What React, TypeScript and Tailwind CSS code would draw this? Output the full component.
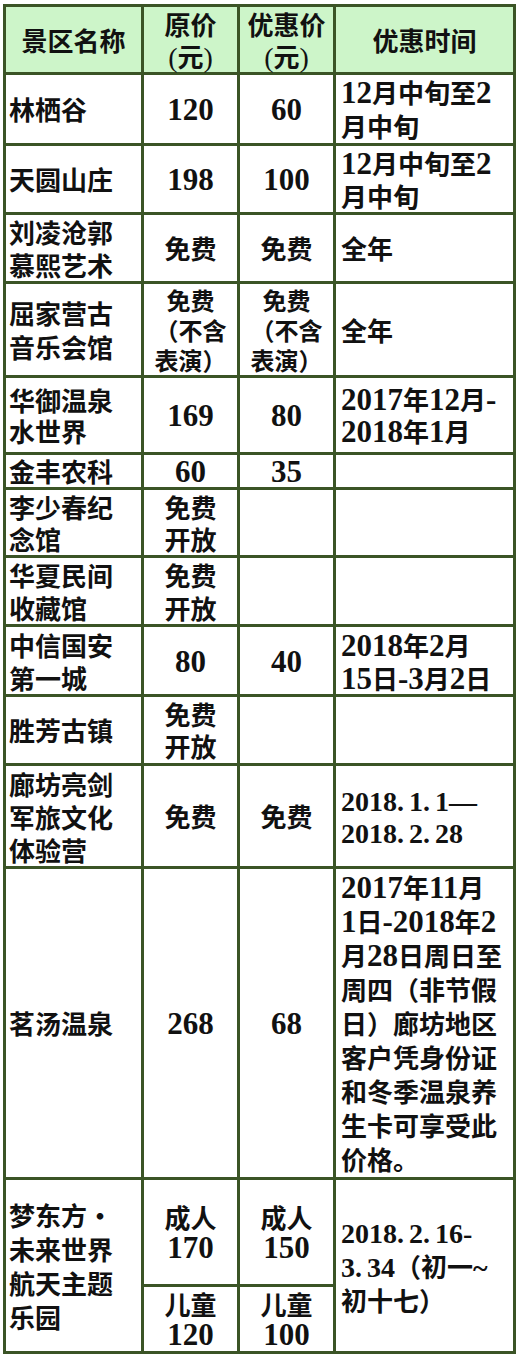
import React from 'react';

// Latin runs (digits, dots, dashes) are set in a serif face, larger and bold, like the original table
const LATIN = /([0-9.\-~—()]+)/;

const Rich = ({ text, num }: { text: string; num: string }) => {
  const parts = text.split(LATIN);
  return (
    <>
      {parts.map((p, i) => {
        if (!p) return null;
        if (!LATIN.test(p)) {
          if (p.includes('·')) {
            return (
              <React.Fragment key={i}>
                {p.replace('·', '')}
                <span className="inline-block w-[26px] text-center font-bold">·</span>
              </React.Fragment>
            );
          }
          return <React.Fragment key={i}>{p}</React.Fragment>;
        }
        const bits = p.split('.');
        return (
          <span key={i} className={`font-['Liberation_Serif',serif] leading-none ${num}`}>
            {bits.map((b, j) => (
              <React.Fragment key={j}>
                {b}
                {j < bits.length - 1 && <span className="mr-[5px]">.</span>}
              </React.Fragment>
            ))}
          </span>
        );
      })}
    </>
  );
};

const NUM = 'font-bold text-[31px]';
const NUM_SM = 'font-bold text-[28px]';

interface CellProps {
  lines: string[];
  className?: string;
  num?: string;
  rowSpan?: number;
}

const Cell = ({ lines, className = '', num = NUM, rowSpan }: CellProps) => (
  <td
    rowSpan={rowSpan}
    className={`border-r-[3px] border-b-[3px] border-[#3b5426] p-0 align-middle whitespace-nowrap ${className}`}
  >
    {lines.map((l, i) => (
      <div key={i}>
        <Rich text={l} num={num} />
      </div>
    ))}
  </td>
);

const NAME = 'pl-[3px] text-left leading-[34px]';
const NAME_33 = 'pl-[3px] text-left leading-[33px]';
const PRICE = 'text-center leading-[32px]';
const TIME = 'pl-[5px] text-left leading-[34px]';
const TIME_33 = 'pl-[5px] text-left leading-[33px]';

const HEAD = 'bg-[#cdf5c9] text-center leading-[32px]';

const App: React.FC = () => {
  return (
    <div className="min-h-[1357px] bg-white pt-[4px] pl-[3px] text-[#111] font-['Noto_Sans_CJK_SC',sans-serif] font-semibold text-[26px]">
      <table className="table-fixed border-separate border-spacing-0 w-[513px] border-l-[3px] border-t-[3px] border-[#3b5426]">
        <colgroup>
          <col className="w-[138px]" />
          <col className="w-[96px]" />
          <col className="w-[96px]" />
          <col className="w-[180px]" />
        </colgroup>
        <tbody>
          {/* Header */}
          <tr className="h-[68px]">
            <Cell lines={['景区名称']} className={HEAD} />
            <Cell lines={['原价', '(元)']} className={HEAD} num="font-normal text-[28px]" />
            <Cell lines={['优惠价', '(元)']} className={HEAD} num="font-normal text-[28px]" />
            <Cell lines={['优惠时间']} className={HEAD} />
          </tr>

          <tr className="h-[71px]">
            <Cell lines={['林栖谷']} className={NAME} />
            <Cell lines={['120']} className={PRICE} />
            <Cell lines={['60']} className={PRICE} />
            <Cell lines={['12月中旬至2', '月中旬']} className={TIME} />
          </tr>

          <tr className="h-[69px]">
            <Cell lines={['天圆山庄']} className={NAME} />
            <Cell lines={['198']} className={PRICE} />
            <Cell lines={['100']} className={PRICE} />
            <Cell lines={['12月中旬至2', '月中旬']} className={TIME_33} />
          </tr>

          <tr className="h-[69px]">
            <Cell lines={['刘凌沧郭', '慕熙艺术']} className={NAME_33} />
            <Cell lines={['免费']} className={PRICE} />
            <Cell lines={['免费']} className={PRICE} />
            <Cell lines={['全年']} className={TIME} />
          </tr>

          <tr className="h-[94px]">
            <Cell lines={['屈家营古', '音乐会馆']} className={NAME} />
            <Cell lines={['免费', '（不含', '表演）']} className="text-center text-[24px] leading-[30px]" />
            <Cell lines={['免费', '（不含', '表演）']} className="text-center text-[24px] leading-[30px]" />
            <Cell lines={['全年']} className={TIME} />
          </tr>

          <tr className="h-[77px]">
            <Cell lines={['华御温泉', '水世界']} className="pl-[3px] text-left leading-[31px]" />
            <Cell lines={['169']} className={PRICE} />
            <Cell lines={['80']} className={PRICE} />
            <Cell lines={['2017年12月-', '2018年1月']} className="pl-[5px] text-left leading-[31px]" />
          </tr>

          <tr className="h-[35px]">
            <Cell lines={['金丰农科']} className="pl-[3px] text-left leading-[32px]" />
            <Cell lines={['60']} className={PRICE} />
            <Cell lines={['35']} className={PRICE} />
            <Cell lines={[]} className={TIME} />
          </tr>

          <tr className="h-[68px]">
            <Cell lines={['李少春纪', '念馆']} className="pl-[3px] text-left leading-[32px]" />
            <Cell lines={['免费', '开放']} className="text-center leading-[32px]" />
            <Cell lines={[]} className={PRICE} />
            <Cell lines={[]} className={TIME} />
          </tr>

          <tr className="h-[69px]">
            <Cell lines={['华夏民间', '收藏馆']} className={NAME_33} />
            <Cell lines={['免费', '开放']} className="text-center leading-[33px]" />
            <Cell lines={[]} className={PRICE} />
            <Cell lines={[]} className={TIME} />
          </tr>

          <tr className="h-[70px]">
            <Cell lines={['中信国安', '第一城']} className={NAME_33} />
            <Cell lines={['80']} className={PRICE} />
            <Cell lines={['40']} className={PRICE} />
            <Cell lines={['2018年2月', '15日-3月2日']} className={TIME_33} />
          </tr>

          <tr className="h-[69px]">
            <Cell lines={['胜芳古镇']} className={NAME} />
            <Cell lines={['免费', '开放']} className="text-center leading-[32px]" />
            <Cell lines={[]} className={PRICE} />
            <Cell lines={[]} className={TIME} />
          </tr>

          <tr className="h-[103px]">
            <Cell lines={['廊坊亮剑', '军旅文化', '体验营']} className={NAME_33} />
            <Cell lines={['免费']} className={PRICE} />
            <Cell lines={['免费']} className={PRICE} />
            <Cell lines={['2018.1.1—', '2018.2.28']} className="pl-[5px] text-left leading-[32px]" num={NUM_SM} />
          </tr>

          <tr className="h-[311px]">
            <Cell lines={['茗汤温泉']} className={NAME} />
            <Cell lines={['268']} className={PRICE} />
            <Cell lines={['68']} className={PRICE} />
            <Cell
              lines={[
                '2017年11月',
                '1日-2018年2',
                '月28日周日至',
                '周四（非节假',
                '日）廊坊地区',
                '客户凭身份证',
                '和冬季温泉养',
                '生卡可享受此',
                '价格。',
              ]}
              className="pl-[5px] text-left leading-[34px]"
            />
          </tr>

          <tr className="h-[107px]">
            <Cell lines={['梦东方·', '未来世界', '航天主题', '乐园']} className={NAME} rowSpan={2} />
            <Cell lines={['成人', '170']} className="text-center leading-[30px]" />
            <Cell lines={['成人', '150']} className="text-center leading-[30px]" />
            <Cell
              lines={['2018.2.16-', '3.34（初一~', '初十七）']}
              className="pl-[5px] text-left leading-[34px]"
              num={NUM_SM}
              rowSpan={2}
            />
          </tr>
          <tr className="h-[67px]">
            <Cell lines={['儿童', '120']} className="text-center leading-[30px]" />
            <Cell lines={['儿童', '100']} className="text-center leading-[30px]" />
          </tr>
        </tbody>
      </table>
    </div>
  );
};

export default App;
